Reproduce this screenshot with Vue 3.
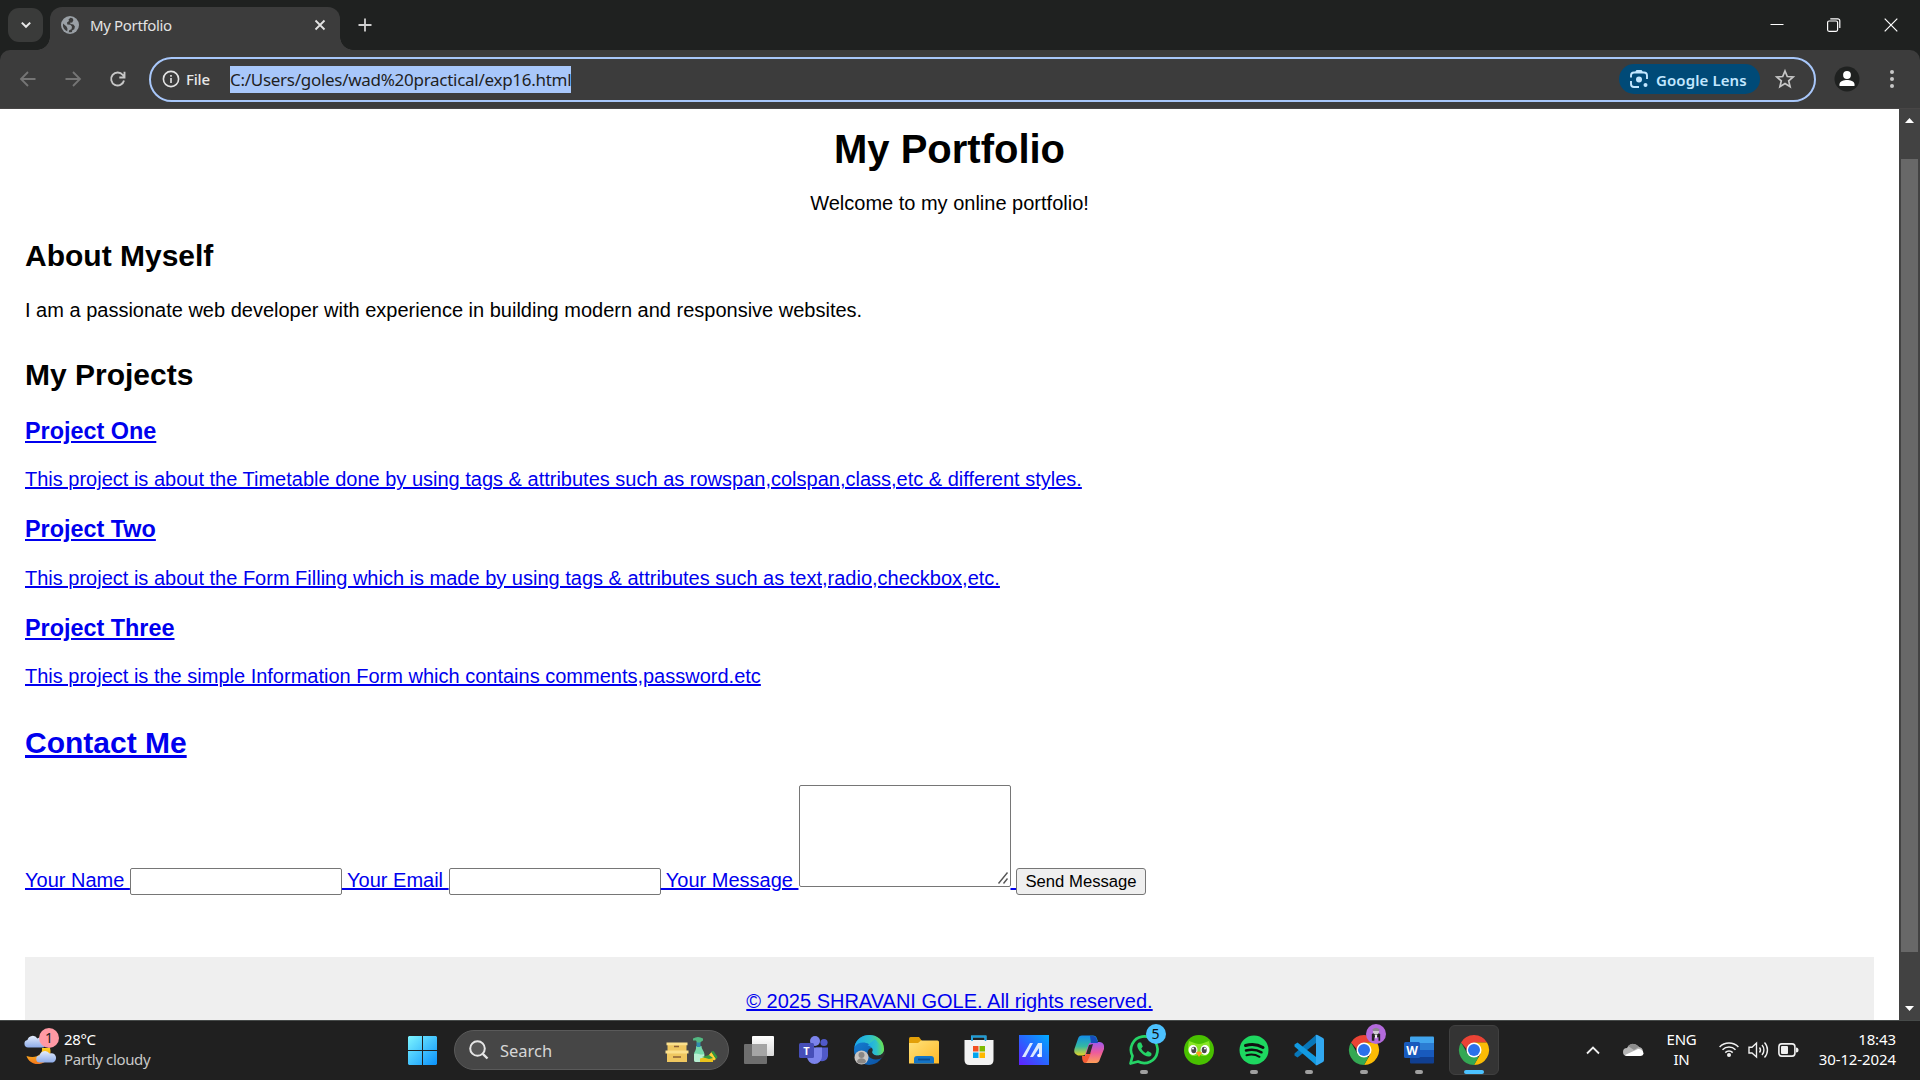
<script setup>
const projects = [
  { title: 'Project One', text: 'This project is about the Timetable done by using tags & attributes such as rowspan,colspan,class,etc & different styles.' },
  { title: 'Project Two', text: 'This project is about the Form Filling which is made by using tags & attributes such as text,radio,checkbox,etc.' },
  { title: 'Project Three', text: 'This project is the simple Information Form which contains comments,password.etc' },
]
</script>

<template>
  <div class="screen">
    <header class="tabstrip">
      <button class="tabsearch"><svg width="12" height="12" viewBox="0 0 12 12"><path d="M1.8 3.6 6 7.8l4.200-4.200" fill="none" stroke="#e8e8e8" stroke-width="2" /></svg></button>
      <div class="tab">
        <svg width="18" height="18" viewBox="0 0 18 18"><circle cx="9" cy="9" r="9" fill="#9aa0a6" /><path d="M9.500 1.800 7.500 3.500 8 5l-2 1.500.3 2 3.200.3 1.500 2-.5 2.400-2.300 1-.5 2A7.200 7.200 0 0 0 11 15.900l.3-1.700 2-1 .6-2.700-1.500-2-2.700-.6-.8-1.200 2.300-.3 1.200-2.200-.6-1.700A7 7 0 0 0 9.500 1.800zM2 7.500l3.500 3 1 2.300-.3 2.400A7.200 7.200 0 0 1 2 7.500z" fill="#3c3c3c" /></svg>
        <span class="tabtitle">My Portfolio</span>
        <svg class="tabclose" width="12" height="12" viewBox="0 0 12 12"><path d="m1.500 1.500 9 9m0-9-9 9" stroke="#e3e3e3" stroke-width="1.800" /></svg>
      </div>
      <svg class="newtab" width="14" height="14" viewBox="0 0 14 14"><path d="M7 .5v13M.5 7h13" stroke="#d0d0d0" stroke-width="1.800" /></svg>
      <div class="wincontrols">
        <svg width="14" height="14" viewBox="0 0 14 14"><path d="M.5 6.500h13" stroke="#fff" /></svg>
        <svg width="14" height="14" viewBox="0 0 14 14" fill="none" stroke="#fff"><rect x=".6" y="3" width="10" height="10.300" rx="1.500" stroke-width="1.200" /><path d="M3.300.8h7.500a2 2 0 0 1 2 2V10" stroke-width="1.200" /></svg>
        <svg width="14" height="14" viewBox="0 0 14 14"><path d="m.7.7 12.600 12.600m0-12.600L.7 13.300" stroke="#fff" stroke-width="1.200" /></svg>
      </div>
    </header>

    <div class="toolbar">
      <svg class="nav" width="16" height="16" viewBox="0 0 16 16" fill="none" stroke="#757575" stroke-width="1.800"><path d="M15.500 8H1.500M8 1 1 8l7 7" /></svg>
      <svg class="nav" width="16" height="16" viewBox="0 0 16 16" fill="none" stroke="#757575" stroke-width="1.800"><path d="M.5 8h14M8 1l7 7-7 7" /></svg>
      <svg class="nav" width="16" height="16" viewBox="0 0 16 16" fill="none" stroke="#c7c7c7" stroke-width="1.900"><path d="M14 9.500A6.500 6.500 0 1 1 12.800 4L14.600 6M14.500.8v5.700H9.300" /></svg>
      <div class="omnibox">
        <svg width="18" height="18" viewBox="0 0 18 18"><circle cx="9" cy="9" r="7.600" fill="none" stroke="#e3e3e3" stroke-width="1.600" /><path d="M9 8v5M9 5v1.800" stroke="#e3e3e3" stroke-width="1.600" /></svg>
        <span class="file">File</span>
        <span class="url"><span class="urltext">C:/Users/goles/wad%20practical/exp16.html</span></span>
        <div class="lens">
          <svg width="20" height="20" viewBox="0 0 20 20" fill="none" stroke="#c2e7ff" stroke-width="1.900"><path d="M2 8.500V6.500A3 3 0 0 1 5 3.500h10a3 3 0 0 1 3 3v3.500M2 12v3a3 3 0 0 0 3 3h5M7 3.200 8 1.900h4l1 1.300" /><circle cx="10" cy="10.500" r="3" fill="#c2e7ff" stroke="none" /><circle cx="16.500" cy="16" r="2" fill="#c2e7ff" stroke="none" /></svg>
          <span>Google Lens</span>
        </div>
        <svg class="star" width="20" height="20" viewBox="0 0 20 20"><path d="m10 2 2.300 5.500 5.900.5-4.500 3.900 1.400 5.800L10 14.600l-5.100 3.100 1.400-5.800L1.800 8l5.900-.5z" fill="none" stroke="#c7c7c7" stroke-width="1.700" /></svg>
      </div>
      <svg class="profile" width="26" height="26" viewBox="0 0 26 26"><circle cx="13" cy="13" r="12.500" fill="#1f2120" /><circle cx="13" cy="9" r="3.900" fill="#fff" /><path d="M5.500 20v-1.700c0-3 4.600-4.300 7.500-4.300s7.500 1.300 7.500 4.300V20z" fill="#fff" /></svg>
      <svg class="dots" width="6" height="20" viewBox="0 0 6 20" fill="#c7c7c7"><circle cx="3" cy="3" r="2" /><circle cx="3" cy="10" r="2" /><circle cx="3" cy="17" r="2" /></svg>
    </div>

    <div class="viewport">
      <main class="page">
        <h1>My Portfolio</h1>
        <p class="welcome">Welcome to my online portfolio!</p>
        <h2>About Myself</h2>
        <p class="about">I am a passionate web developer with experience in building modern and responsive websites.</p>
        <h2>My Projects</h2>
        <article v-for="project in projects" :key="project.title" class="project">
          <h3><a>{{ project.title }}</a></h3>
          <p><a>{{ project.text }}</a></p>
        </article>
        <h2 class="contact"><a>Contact Me</a></h2>
        <form class="form" @submit.prevent><a>Your Name <input type="text"> Your Email <input type="email"> Your Message <span class="message"><textarea></textarea><svg class="grip" width="10" height="12" viewBox="0 0 10 12"><path d="M.5 11.500 9.500.5M5.500 11.500l4-5" stroke="#555" stroke-width="1.400" /></svg></span> <button>Send Message</button></a></form>
        <footer><a>© 2025 SHRAVANI GOLE. All rights reserved.</a></footer>
      </main>
      <div class="scrollbar">
        <svg width="9" height="5" viewBox="0 0 9 5"><path d="M0 5 4.500 0 9 5z" fill="#fff" /></svg>
        <div class="thumb"></div>
        <svg width="9" height="5" viewBox="0 0 9 5"><path d="M0 0 4.500 5 9 0z" fill="#fff" /></svg>
      </div>
    </div>

    <div class="taskbar">
      <div class="weather">
        <svg width="36" height="38" viewBox="0 0 36 38">
          <defs>
            <linearGradient id="cloud" x2="0" y2="1"><stop stop-color="#e4edfc" /><stop offset="1" stop-color="#8dabe8" /></linearGradient>
            <linearGradient id="moon" x2="0" y2="1"><stop stop-color="#ffd21e" /><stop offset="1" stop-color="#f3761c" /></linearGradient>
          </defs>
          <path d="M4 16.500a3.800 3.800 0 0 1-.6-7.500 5.500 5.500 0 0 1 10-1.500 4.800 4.800 0 0 1 6 9z" fill="url(#cloud)" />
          <path d="M18 17c1 6-5 11-15.500 8 2 6 8 9.500 15 7.500 7-2 10.500-9 8.500-15.500z" fill="url(#moon)" />
          <path d="M16 31.500a3.500 3.500 0 0 1-.5-7 5.500 5.500 0 0 1 10-2 4.500 4.500 0 0 1 3.500 9z" fill="url(#cloud)" />
        </svg>
        <span class="alert">1</span>
        <div class="weathertext"><span class="temp">28°C</span><span class="cond">Partly cloudy</span></div>
      </div>

      <svg class="start" width="29" height="29" viewBox="0 0 29 29"><defs><linearGradient id="win" x2="1" y2="1"><stop stop-color="#7df5ff" /><stop offset="1" stop-color="#0a91fb" /></linearGradient></defs><path d="M1 0h13v14H0V1zM15 0h13l1 1v13H15zM0 15h14v14H1l-1-1zM15 15h14v13l-1 1H15z" fill="url(#win)" /></svg>

      <div class="search">
        <svg width="20" height="20" viewBox="0 0 20 20" fill="none" stroke="#e6e6e6" stroke-width="2"><circle cx="8.500" cy="8.500" r="7.300" fill="#ffffff18" /><path d="m13.800 13.800 4.700 4.700" stroke-width="2.400" /></svg>
        <span>Search</span>
        <svg class="deco" width="52" height="26" viewBox="0 0 52 26">
          <path d="M2.500 6h19v10h-19zM2 16h20v9H2z" fill="#efc760" /><path d="M1.500 5.500h21v2.700h-21zM.5 13.500h23v3H.5z" fill="#fbe08c" /><path d="M9 9.500h5M8 20h8" stroke="#8b6136" stroke-width="1.600" />
          <path d="M31 9h5.500c0 4 3.500 5 3 10v3.500q0 2.500-2.500 2.500h-6q-2 0-2-2v-5c0-4 2.500-4 2-9z" fill="#76d8aa" /><path d="M29 17c3-2 7 2 10 0v6q-1 2-3 2h-5q-2 0-2-2z" fill="#b7eed1" /><path d="M31.500 5h4v5h-4z" fill="#328caf" /><path d="M28 1.500q5-3 10 0v2l-3 2h-3l-1-2h-3z" fill="#53b882" />
          <path d="m43 19 3.500-4 4.500 7-2 1.500z" fill="#ffd235" /><path d="m46 14.500 2.500-.5 4 6-1.500 2z" fill="#329542" /><path d="m35 21.500 8-2 5 2v3.500H35z" fill="#eac31c" /><path d="m37 20 7-2 4 3-4 1z" fill="#369b40" />
        </svg>
      </div>

      <div class="apps">
        <div class="app"><svg width="32" height="32" viewBox="0 0 32 32"><defs><linearGradient id="tv" x2="0" y2="1"><stop stop-color="#fff" /><stop offset="1" stop-color="#d9d9d9" /></linearGradient></defs><rect x="9" y="2" width="22" height="20" rx="1" fill="url(#tv)" /><rect x="1" y="10" width="23" height="20" rx="1" fill="#6e6e6e" /><path d="M9 10h15v12H9z" fill="#a5a5a5" /></svg></div>
        <div class="app"><svg width="32" height="32" viewBox="0 0 32 32"><circle cx="17" cy="7" r="5" fill="#7b83eb" /><circle cx="26" cy="8.500" r="3.600" fill="#5059c9" /><path d="M18 13.500h12v8a6 6 0 0 1-9 5z" fill="#5059c9" /><path d="M9 13.500h15v9a7.500 7.500 0 0 1-15 0z" fill="#7b83eb" /><rect x="1" y="9" width="15" height="15" rx="1.500" fill="#464eb8" /><text x="8.500" y="20.500" text-anchor="middle" class="glyph" font-size="11">T</text></svg></div>
        <div class="app"><svg width="32" height="32" viewBox="0 0 32 32"><defs><linearGradient id="e1" x2="1"><stop stop-color="#19a7ee" /><stop offset=".55" stop-color="#2fc2c8" /><stop offset="1" stop-color="#69e350" /></linearGradient><linearGradient id="e2" x2="1" y2="1"><stop stop-color="#1683d9" /><stop offset="1" stop-color="#0b4f9f" /></linearGradient></defs><circle cx="16" cy="16" r="15" fill="url(#e2)" /><path d="M1.500 13C4-3.500 31-3 31 15c0 7-9 8-11.500 4-1-1.500 1-2 0-5C17 8 6 6 1.500 13z" fill="url(#e1)" /><path d="M31 15c0 7-9 8-11.500 4-1-1.500.7-2 0-5-5 0-6 5-4 8 3 4.500 10 4 14 1.500L32 20z" fill="#2b2b2b" /><path d="M31 15c0 7-9 8-11.500 4 2-3-1-7-5-7.500L22 5z" fill="url(#e1)" /><circle cx="8.500" cy="23.500" r="7" fill="#c8c5c3" /><circle cx="8.500" cy="21" r="3" fill="#8a8785" /><path d="M4 28c0-5 9-5 9 0-2 2-7 2-9 0z" fill="#8a8785" /></svg></div>
        <div class="app"><svg width="32" height="32" viewBox="0 0 32 32"><defs><linearGradient id="fold" x2="1" y2="1"><stop stop-color="#ffe27a" /><stop offset="1" stop-color="#ffb928" /></linearGradient></defs><path d="M1 4.500Q1 3 2.500 3H11l3 4v6H1z" fill="#e3a008" /><path d="M1 9h9l3-2.500h16.500Q31 6.500 31 8v21.500H1z" fill="url(#fold)" /><path d="M6 29.500V25q0-3 3-3h14q3 0 3 3v4.500z" fill="#1475c7" /><path d="M10 25.500h12" stroke="#0b4d91" stroke-width="1.800" /></svg></div>
        <div class="app"><svg width="32" height="32" viewBox="0 0 32 32"><path d="M9 7.500V2.500h13.500v5" fill="none" stroke="#50c7f5" stroke-width="2" /><path d="M1.500 6h29v20q0 5-5 5h-19q-5 0-5-5z" fill="#f2f2f2" /><path d="M9 7V2.500h13.500V7" fill="none" stroke="#199bd9" stroke-width="1.500" /><path d="M10 12h5.500v5.500H10z" fill="#f25022" /><path d="M16.500 12H22v5.500h-5.500z" fill="#7fba00" /><path d="M10 18.500h5.500V24H10z" fill="#00a4ef" /><path d="M16.500 18.500H22V24h-5.500z" fill="#ffb900" /></svg></div>
        <div class="app"><svg width="32" height="32" viewBox="0 0 32 32"><defs><linearGradient id="asus" x1="0" y1="1" x2="1" y2="0"><stop stop-color="#6220ff" /><stop offset=".5" stop-color="#2866ff" /><stop offset="1" stop-color="#00acff" /></linearGradient></defs><path d="M1 1h30v30H1z" fill="url(#asus)" /><path d="m4 23 8-14h3L7.500 23zM12 23l8-14h4v14h-3v-9l-6 9z" fill="#dbe9ff" /><circle cx="21" cy="21.500" r="1.800" fill="#fff" /></svg></div>
        <div class="app"><svg width="32" height="32" viewBox="0 0 32 32"><defs><linearGradient id="cp1" x2="0" y2="1"><stop stop-color="#128ce9" /><stop offset=".55" stop-color="#35b9a0" /><stop offset="1" stop-color="#e5d325" /></linearGradient><linearGradient id="cp2" x2="0" y2="1"><stop stop-color="#a058ef" /><stop offset=".5" stop-color="#ed5b9d" /><stop offset="1" stop-color="#ff9f57" /></linearGradient></defs><path d="M9 2h11q3 0 4 4l1 3h-4q-3 0-4 4l-3 9q-1 4-4 4H5Q0 24 1.500 18L5 6q1-4 4-4z" transform="translate(0 -.5) scale(1 .83)" transform-origin="0 2" fill="url(#cp1)" /><path d="M23 29H14q-4 0-3-5l4-12q1-4 5-4h7q5 1 4 7l-4 10q-1 4-4 4z" fill="url(#cp2)" /><path d="M17 2h3q3 0 4 4l1 3h-7z" fill="#174dbd" /><path d="M9 22h3l3-3h3l-3 7q-1 3-3 3-3-.5-3-7z" fill="#f45b34" /><path d="m16 11 4-1-3 10h-4z" fill="#2b2b2b" /></svg></div>
        <div class="app"><svg width="32" height="32" viewBox="0 0 32 32"><path d="M2.500 29.500 4.500 22A13.300 13.300 0 1 1 10 27.500z" fill="none" stroke="#25d366" stroke-width="2.700" stroke-linejoin="round" /><path d="M11 8.500c-3 2-2 6 2 10s8.500 5.500 10.500 2.500l-.2-2-3.500-2-2 2c-2-1-3.500-2.500-4.500-4.500l1.500-2-1.700-4z" fill="#25d366" /></svg><span class="badge">5</span><i></i></div>
        <div class="app"><svg width="32" height="32" viewBox="0 0 32 32"><circle cx="16" cy="16" r="15" fill="#49c000" /><path d="M6 7c4 1 7 3 10 3s6-2 10-3c2 8 1 15-5 15-3 0-3-1-5-1s-2 1-5 1C5 22 4 15 6 7z" fill="#87e523" /><ellipse cx="10" cy="16" rx="4.500" ry="5" fill="#fff" /><ellipse cx="22" cy="16" rx="4.500" ry="5" fill="#fff" /><ellipse cx="10.800" cy="16" rx="2.500" ry="3.200" fill="#4b4b4b" /><ellipse cx="21.200" cy="16" rx="2.500" ry="3.200" fill="#4b4b4b" /><circle cx="10" cy="14.500" r="1" fill="#fff" /><circle cx="22" cy="14.500" r="1" fill="#fff" /><path d="M13 18.500q3-2 6 0L16 23z" fill="#ff9b23" /></svg></div>
        <div class="app"><svg width="32" height="32" viewBox="0 0 32 32"><circle cx="16" cy="16" r="14.500" fill="#1ed760" /><g fill="none" stroke="#101010" stroke-linecap="round"><path d="M7.500 11.500c6-1.800 12.500-1 17.500 2" stroke-width="3" /><path d="M8 16.500c5.500-1.500 11-.8 15.500 1.800" stroke-width="2.500" /><path d="M8.500 21.200c4.500-1.200 9-.8 13 1.600" stroke-width="2" /></g></svg><i></i></div>
        <div class="app"><svg width="32" height="32" viewBox="0 0 32 32"><path d="m23 9-18.500 14.500-3-2v-2L23 1z" fill="#0877b9" /><path d="M23 23 4.500 8.500l-3 2v2L23 31z" fill="#129ae1" /><path d="M22.500 1q1-.5 2 0l5.500 3q1 .5 1 2v20q0 1.500-1 2l-5.500 3q-1 .5-2 0l.5-1V2z" fill="#31a8f0" /></svg><i></i></div>
        <div class="app"><svg width="32" height="32" viewBox="0 0 32 32"><path d="M3 8.500A15 15 0 0 1 29 8.500H16v15z" fill="#ea4335" /><path d="M29 8.500A15 15 0 0 1 16 31l6.500-11.300L16 8.500z" fill="#fbbc05" /><path d="M3 8.500 9.500 19.700 16 23h4.500L16 31A15 15 0 0 1 3 8.500z" fill="#34a853" /><circle cx="16" cy="16" r="7.500" fill="#fff" /><circle cx="16" cy="16" r="6" fill="#2b70ea" /></svg><span class="badge avatar"><svg width="10" height="14" viewBox="0 0 12 16"><path d="M1 8q5-3 10 0v8H9v-4H4v4H1z" fill="#222" /><circle cx="6" cy="5" r="3.600" fill="#cfcbd2" /><path d="M1.500 2.500q4.500-4 9 0l-1 2h-7z" fill="#8c8591" /><path d="M4.500 9h3l-.5 4H5z" fill="#eee" /></svg></span><i></i></div>
        <div class="app"><svg width="32" height="32" viewBox="0 0 32 32"><path d="M8 2.500h22q1 0 1 1V9H7V3.500q0-1 1-1z" fill="#41a5ee" /><path d="M7 9h24v7H7z" fill="#2b7cd3" /><path d="M7 16h24v7H7z" fill="#185abd" /><path d="M7 23h24v5.500q0 1-1 1H8q-1 0-1-1z" fill="#103f91" /><rect x="1" y="8" width="16" height="16" rx="1.500" fill="#185abd" /><text x="9" y="20.500" text-anchor="middle" class="glyph" font-size="12">W</text></svg><i></i></div>
        <div class="app active"><svg width="32" height="32" viewBox="0 0 32 32"><path d="M3 8.500A15 15 0 0 1 29 8.500H16v15z" fill="#ea4335" /><path d="M29 8.500A15 15 0 0 1 16 31l6.500-11.300L16 8.500z" fill="#fbbc05" /><path d="M3 8.500 9.500 19.700 16 23h4.500L16 31A15 15 0 0 1 3 8.500z" fill="#34a853" /><circle cx="16" cy="16" r="7.500" fill="#fff" /><circle cx="16" cy="16" r="6" fill="#2b70ea" /></svg><i></i></div>
      </div>

      <div class="tray">
        <svg class="chev" width="14" height="10" viewBox="0 0 14 10"><path d="m1 8.500 6-6 6 6" fill="none" stroke="#f0f0f0" stroke-width="1.800" /></svg>
        <svg class="onedrive" width="21" height="14" viewBox="0 0 21 14"><path d="M4 13a4 4 0 0 1 0-8 7 7 0 0 1 12-1 4.700 4.700 0 0 1 1 9z" fill="#b5b5b5" /><path d="M5 3q5-5 11 1l-5 3z" fill="#8c8c8c" /><path d="m2 12 13-6q5 0 5.500 4.500Q20 13 17 13H4q-1.500 0-2-1z" fill="#fff" /></svg>
        <div class="lang"><span>ENG</span><span>IN</span></div>
        <svg class="wifi" width="20" height="18" viewBox="0 0 20 18" fill="none" stroke="#f0f0f0" stroke-width="1.500"><path d="M.6 6a13.300 13.300 0 0 1 18.800 0M3.500 8.800a9.200 9.200 0 0 1 13 0M6.300 11.600a5.200 5.200 0 0 1 7.400 0" /><circle cx="10" cy="14" r="2" fill="#f0f0f0" stroke="none" /></svg>
        <svg class="sound" width="21" height="18" viewBox="0 0 21 18" fill="none" stroke="#f0f0f0" stroke-width="1.400"><path d="M1 6.200h3L8.500 2v14L4 12H1z" /><path d="M11.500 6.500a4 4 0 0 1 0 5M14 4a7.500 7.500 0 0 1 0 10M16.500 1.500a11 11 0 0 1 0 15" /></svg>
        <svg class="battery" width="21" height="14" viewBox="0 0 21 14"><rect x=".9" y=".9" width="16" height="12.200" rx="2.800" fill="none" stroke="#f0f0f0" stroke-width="1.600" /><rect x="3" y="3" width="7" height="8" rx="1" fill="#f0f0f0" /><path d="M18 4.500q2.500 0 2.500 2.500T18 9.500z" fill="#f0f0f0" /></svg>
        <div class="clock"><span>18:43</span><span>30-12-2024</span></div>
      </div>
    </div>
  </div>
</template>

<style>
html, body { margin: 0; overflow: hidden; }
</style>

<style scoped>
.screen { width: 1920px; height: 1080px; display: flex; flex-direction: column; overflow: hidden; background: #1f2120; font-family: "Noto Sans", "Open Sans", sans-serif; }
svg { display: block; flex: none; overflow: visible; }
.tabstrip { height: 50px; flex: none; display: flex; align-items: center; padding-left: 8px; box-sizing: border-box; }
.tabsearch { width: 35px; height: 34px; padding: 0; border: 0; border-radius: 11px; background: #3a3b3a; display: flex; align-items: center; justify-content: center; }
.tab { position: relative; width: 290px; height: 43px; align-self: flex-end; margin-left: 7px; padding: 0 14px 7px 11px; box-sizing: border-box; background: #3c3c3c; border-radius: 12px 12px 0 0; display: flex; align-items: center; }
.tab::before, .tab::after { content: ""; position: absolute; bottom: 0; width: 13px; height: 13px; }
.tab::before { left: -13px; background: radial-gradient(circle at 0 0, transparent 12.500px, #3c3c3c 13px); }
.tab::after { right: -13px; background: radial-gradient(circle at 100% 0, transparent 12.500px, #3c3c3c 13px); }
.tabtitle { margin-left: 11px; font-size: 15px; letter-spacing: -.35px; color: #e3e3e3; flex: 1; }
.newtab { margin-left: 18px; }
.wincontrols { margin-left: auto; display: flex; gap: 43px; padding-right: 22px; }
.toolbar { height: 59px; flex: none; display: flex; align-items: center; background: #3c3c3c; border-radius: 10px 10px 0 0; box-sizing: border-box; padding: 0 25px 0 20px; border-bottom: 1px solid #484646; }
.nav { margin-right: 29px; }
.omnibox { width: 1667px; height: 45px; margin-left: -6px; box-sizing: border-box; border: 2px solid #a8c7fa; border-radius: 23px; display: flex; align-items: center; padding: 0 19px 0 11px; }
.file { margin-left: 6px; width: 44px; font-size: 15px; font-weight: 500; letter-spacing: -.2px; color: #e8e8e8; }
.url { height: 27px; display: flex; align-items: center; width: 341px; background: #a8c7fa; color: #1f1f1f; }
.urltext { font-size: 17px; letter-spacing: -.28px; white-space: nowrap; }
.lens { margin-left: auto; width: 141px; height: 30px; border-radius: 15px; background: #004a77; color: #c2e7ff; display: flex; align-items: center; box-sizing: border-box; padding-left: 10px; gap: 7px; font-size: 15px; font-weight: 600; white-space: nowrap; }
.lens span { padding-top: 1px; letter-spacing: .1px; }
.star { margin-left: 15px; }
.profile { margin-left: 18px; }
.dots { margin-left: auto; }

.viewport { height: 911px; flex: none; display: flex; background: #fff; overflow: hidden; }
.page { width: 1899px; box-sizing: border-box; padding: 17px 25px 0; font-family: "Liberation Sans", Arial, sans-serif; font-size: 20px; line-height: 22px; color: #000; }
h1, h2, h3, p { margin: 0; }
h1 { font-size: 40px; line-height: 46px; text-align: center; }
.welcome { text-align: center; margin-top: 20px; }
h2 { font-size: 30px; line-height: 34px; margin-top: 25px; }
.about { margin: 26px 0 37px; }
.about + h2 { margin-bottom: 25.750px; }
h3 { font-size: 23.400px; line-height: 27px; }
.project { height: 98.500px; }
.project p { padding-top: 23.500px; }
a { color: #0000ee; text-decoration: underline; }
.contact { margin-top: 12.250px; }
.form { margin-top: 25px; height: 172px; white-space: nowrap; }
input { width: 212px; height: 27px; box-sizing: border-box; border: 1px solid #767676; border-radius: 2px; padding: 1px 2px; font: 16.667px "Liberation Sans", sans-serif; background: #fff; }
.message { display: inline-block; position: relative; margin: 0 -.7px 0 .7px; }
textarea { width: 212px; height: 102px; box-sizing: border-box; border: 1px solid #767676; border-radius: 2px; margin: 0; vertical-align: baseline; resize: none; }
.grip { position: absolute; right: 3px; bottom: 7px; }
.form button { width: 130px; height: 27px; box-sizing: border-box; padding: 0; border: 1px solid #767676; border-radius: 3px; background: #efefef; color: #000; font: 16.667px "Liberation Sans", Arial, sans-serif; }
footer { height: 90px; padding-top: 33px; box-sizing: border-box; background: #efefef; text-align: center; }
.scrollbar { width: 21px; box-sizing: border-box; background: #424242; display: flex; flex-direction: column; align-items: center; padding: 9px 0; justify-content: space-between; }
.thumb { width: 17px; height: 793px; background: #686868; margin-bottom: 18px; }

.taskbar { height: 60px; flex: none; box-sizing: border-box; border-top: 1px solid #464a49; padding-bottom: 1px; background: #202020; display: flex; align-items: center; color: #fff; font-size: 15px; }
.weather { position: relative; display: flex; align-items: center; width: 408px; padding-left: 24px; box-sizing: border-box; align-self: stretch; }
.alert { position: absolute; left: 39px; top: 7px; width: 20px; height: 20px; border-radius: 50%; background: #ff99a4; color: #1c1c1c; font-size: 14px; line-height: 20px; text-align: center; }
.weathertext { display: flex; flex-direction: column; margin-left: 4px; padding-bottom: 3px; line-height: 20px; letter-spacing: -.35px; }
.cond { color: #c8c8c8; }
.search { margin-left: 17px; width: 275px; height: 40px; border-radius: 20px; box-sizing: border-box; border: 1px solid #5a5a5a; background: #464646; display: flex; align-items: center; padding: 0 11px 0 14px; color: #d6d6d6; font-size: 16.500px; }
.search span { margin-left: 11px; }
.deco { margin-left: auto; }
.apps { display: flex; margin-left: 2.500px; }
.app { position: relative; width: 55px; height: 50px; display: flex; align-items: center; justify-content: center; }
.app i { position: absolute; bottom: 1px; left: 23.500px; width: 8px; height: 4px; border-radius: 2px; background: #a0a0a0; }
.active { width: 50px; margin-left: 2.500px; box-sizing: border-box; background: #343434; border: 1px solid #404040; border-radius: 6px; }
.active i { left: 14px; bottom: 0; width: 20px; background: #4cc2ff; }
.glyph { fill: #fff; font-family: "Open Sans", sans-serif; font-weight: 700; }
.badge { position: absolute; right: 6px; top: -1px; width: 20px; height: 20px; border-radius: 50%; background: #4cc2ff; color: #101010; line-height: 20px; text-align: center; display: flex; justify-content: center; align-items: center; font-size: 14px; }
.avatar { background: #b36adc; }
.tray { margin-left: auto; padding-right: 24px; display: flex; align-items: center; }
.onedrive { margin-left: 23px; }
.lang { width: 30px; margin-left: 22.500px; padding-bottom: 3px; display: flex; flex-direction: column; align-items: center; line-height: 20px; letter-spacing: -.3px; }
.wifi { margin-left: 22px; }
.sound { margin-left: 9px; }
.battery { margin-left: 9.500px; }
.clock { width: 77px; margin-left: 20px; padding-bottom: 3px; display: flex; flex-direction: column; align-items: flex-end; line-height: 20px; letter-spacing: -.1px; white-space: nowrap; }
</style>
